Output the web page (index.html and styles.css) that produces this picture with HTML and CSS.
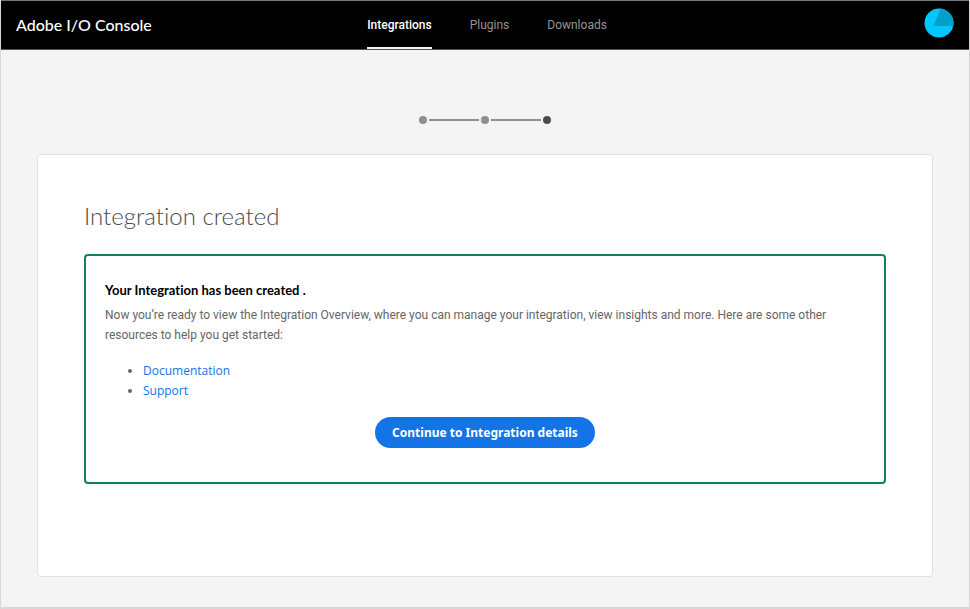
FILE: index.html
```html
<!DOCTYPE html>
<html lang="en">
<head>
<meta charset="utf-8">
<title>Adobe I/O Console</title>
<link rel="stylesheet" href="styles.css">
</head>
<body>
<header class="topbar">
  <div class="brand">Adobe I/O Console</div>
  <nav class="tabs">
    <a class="tab tab-active" href="#integrations">Integrations</a>
    <a class="tab" href="#plugins">Plugins</a>
    <a class="tab" href="#downloads">Downloads</a>
  </nav>
  <button class="avatar" type="button" aria-label="Account">
    <svg viewBox="0 0 30 30" width="30" height="30" aria-hidden="true">
      <circle cx="15" cy="15" r="14.5" fill="#00c8ff"/>
      <path d="M16.5 0.6A14.5 14.5 0 0 1 28.8 19.5L27.5 18H9.5Z" fill="#00a0cc"/>
    </svg>
  </button>
</header>
<main class="page">
  <div class="steps">
    <span class="dot"></span><span class="line"></span><span class="dot"></span><span class="line"></span><span class="dot dot-current"></span>
  </div>
  <section class="card">
    <h1>Integration created</h1>
    <div class="notice">
      <h2>Your Integration has been created .</h2>
      <p>Now you’re ready to view the Integration Overview, where you can manage your integration, view insights and more. Here are some other resources to help you get started:</p>
      <ul>
        <li><a href="#documentation">Documentation</a></li>
        <li><a href="#support">Support</a></li>
      </ul>
      <button class="primary" type="button">Continue to Integration details</button>
    </div>
  </section>
</main>
</body>
</html>
```
FILE: styles.css
```css
* {
  box-sizing: border-box;
}

body {
  display: flex;
  flex-direction: column;
  min-height: 100vh;
  margin: 0;
  border: 1px solid #d8d8d8;
  border-top: 0;
  border-bottom-width: 2px;
  background: #f4f4f4;
  color: #666;
  font: 12px/20px "Open Sans", "Noto Sans", sans-serif;
  font-variant-ligatures: none;
}

.topbar {
  display: grid;
  grid-template-columns: 1fr auto 1fr;
  height: 50px;
  padding: 0 15px;
  border-top: 1px solid #777;
  border-bottom: 1px solid #555;
  background: #000;
}

.brand {
  align-self: center;
  color: #fff;
  font-family: Lato, sans-serif;
  font-size: 16px;
  font-weight: 500;
}

.tabs {
  display: flex;
  gap: 38px;
  padding-left: 4px;
}

.tab {
  display: flex;
  align-items: center;
  border-top: 2px solid transparent;
  border-bottom: 2px solid transparent;
  color: #959595;
  font-family: Roboto, sans-serif;
  text-decoration: none;
}

.tab-active {
  border-bottom-color: #f4f4f4;
  color: #fff;
  font-weight: 500;
}

.avatar {
  justify-self: end;
  align-self: start;
  height: 30px;
  margin-top: 7px;
  padding: 0;
  border: 0;
  background: none;
}

.page {
  display: flex;
  flex: 1;
  flex-direction: column;
  padding: 65px 36px 30px;
}

.steps {
  display: flex;
  align-items: center;
  justify-content: center;
  gap: 2px;
  height: 10px;
  margin-bottom: 29px;
}

.dot {
  width: 8px;
  height: 8px;
  border-radius: 50%;
  background: #8e8e8e;
}

.dot-current {
  background: #4b4b4b;
}

.line {
  width: 50px;
  height: 2px;
  background: #8e8e8e;
}

.card {
  flex: 1;
  padding: 45px 46px;
  border: 1px solid #e1e1e1;
  border-radius: 4px;
  background: #fff;
}

h1 {
  margin: 0 0 22px;
  color: #4b4b4b;
  font-family: Lato, sans-serif;
  font-size: 24px;
  font-weight: 300;
  line-height: 32px;
}

.notice {
  padding: 24px 19px 34px;
  border: 2px solid #12805c;
  border-radius: 4px;
}

h2 {
  margin: 0 0 5px;
  color: #000;
  font-family: Lato, sans-serif;
  font-size: 13px;
  font-weight: 700;
  line-height: 20px;
}

p {
  margin: 0 0 16px;
  font-family: Roboto, sans-serif;
}

ul {
  margin: 0 0 16px;
  padding-left: 38px;
}

li a {
  color: #1473e6;
  text-decoration: none;
}

.primary {
  display: block;
  height: 31px;
  margin: 0 auto;
  padding: 0 17px;
  border: 0;
  border-radius: 16px;
  background: #1473e6;
  color: #fff;
  font: 700 12px/20px "Noto Sans", sans-serif;
}
```
